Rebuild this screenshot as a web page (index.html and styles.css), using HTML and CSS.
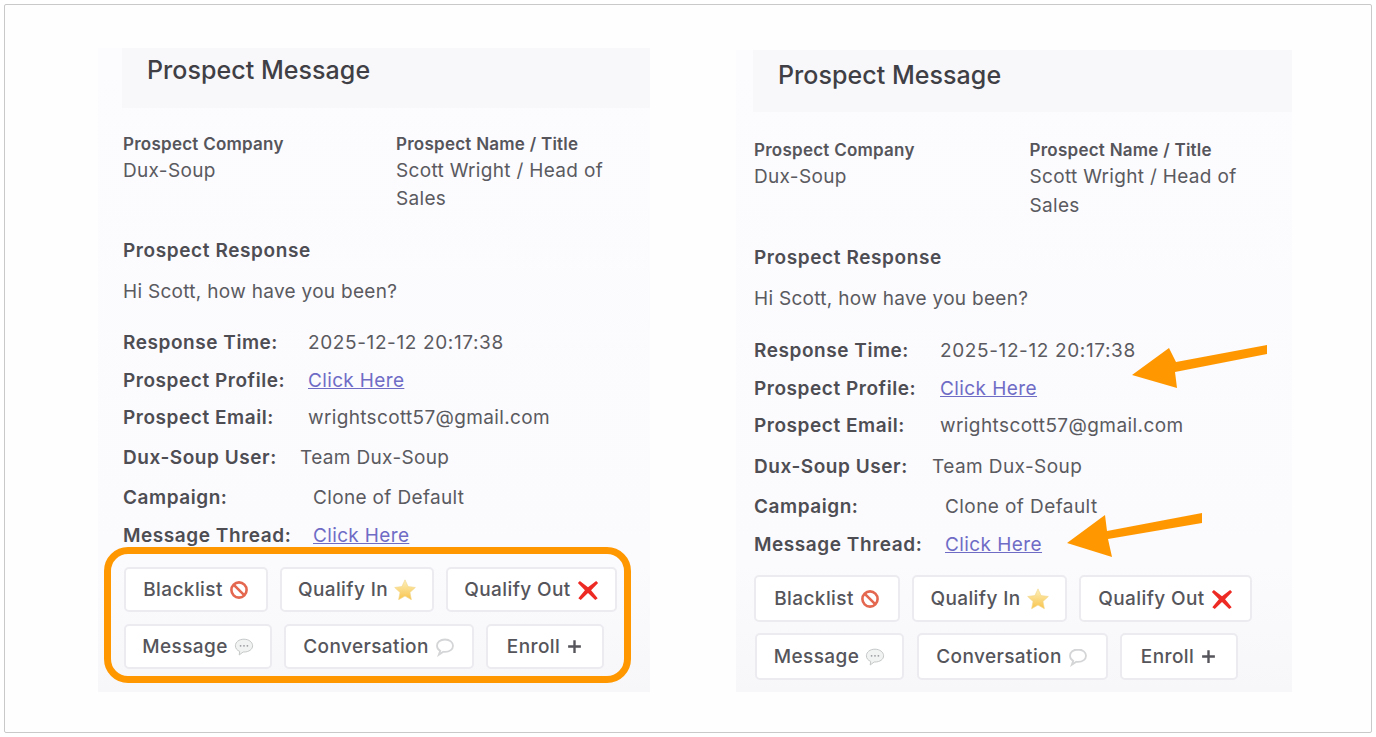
FILE: index.html
```html
<!DOCTYPE html>
<html lang="en">
<head>
<meta charset="utf-8">
<title>Prospect Message</title>
<link rel="stylesheet" href="styles.css">
</head>
<body>
<svg class="defs" width="0" height="0" aria-hidden="true">
  <defs>
    <linearGradient id="star" x1="0" y1="0" x2="0" y2="1">
      <stop offset="0" stop-color="#fdf0bc"/>
      <stop offset="1" stop-color="#f8c44c"/>
    </linearGradient>
    <symbol id="i-no" viewBox="0 0 20 20">
      <circle cx="10" cy="10" r="7.6" fill="#fff" stroke="#e4674f" stroke-width="2.6"/>
      <path d="M4.8 4.8 15.2 15.2" stroke="#e4674f" stroke-width="2.6"/>
    </symbol>
    <symbol id="i-star" viewBox="0 0 20 20">
      <path d="M10 .8 12.800 6.900 19.400 7.700 14.500 12.200 15.800 18.800 10 15.500 4.200 18.800 5.500 12.200.6 7.700 7.200 6.900Z" fill="url(#star)" stroke="#f3d88c" stroke-width=".6"/>
    </symbol>
    <symbol id="i-x" viewBox="0 0 20 20">
      <path d="M2.600 1.800 10 7.600 17.400 1.800 19.200 3.600 12.800 10.200 18.800 17.400 16.600 19.200 10 12.800 3.400 19.200 1.200 17.400 7.200 10.200.8 3.600Z" fill="#ee2a24"/>
    </symbol>
    <symbol id="i-msg" viewBox="0 0 20 20">
      <path d="M10 2.200C5 2.200 1.400 5 1.400 8.800c0 2.600 1.700 4.600 4.300 5.600l-.5 3.600 3.900-3c.3 0 .6 0 .9 0 5 0 8.600-2.700 8.600-6.200S15 2.200 10 2.200Z" fill="#f1f2f2" stroke="#c5c8c8" stroke-width="1"/>
      <circle cx="6.600" cy="8.800" r=".9" fill="#9a9d9f"/><circle cx="10" cy="8.800" r=".9" fill="#9a9d9f"/><circle cx="13.400" cy="8.800" r=".9" fill="#9a9d9f"/>
    </symbol>
    <symbol id="i-conv" viewBox="0 0 20 20">
      <path d="M10 2.500C5.200 2.500 2 5.200 2 8.800c0 2.200 1.200 4 3.200 5.100l-1.400 3.900 4.500-3c.6.100 1.100.100 1.700.100 4.800 0 8-2.600 8-6.100S14.800 2.500 10 2.500Z" fill="#fff" stroke="#d4d5d6" stroke-width="1.800"/>
    </symbol>
    <symbol id="i-plus" viewBox="0 0 20 20">
      <path d="M10 2.500v15M2.500 10h15" stroke="#55555b" stroke-width="2.800" fill="none"/>
    </symbol>
  </defs>
</svg>

<main class="frame">
  <section class="panel panel-a">
    <header class="panel-head"><h2>Prospect Message</h2></header>
    <div class="info">
      <div><h3>Prospect Company</h3><p>Dux-Soup</p></div>
      <div><h3>Prospect Name / Title</h3><p>Scott Wright / Head of<br>Sales</p></div>
    </div>
    <h4 class="resp-title">Prospect Response</h4>
    <p class="resp-text">Hi Scott, how have you been?</p>
    <div class="rows">
      <div class="row"><b class="k k-a">Response Time:</b><span class="num">2025-12-12 20:17:38</span></div>
      <div class="row"><b class="k k-a">Prospect Profile:</b><a href="#">Click Here</a></div>
      <div class="row row-tall"><b class="k k-a">Prospect Email:</b><span>wrightscott57@gmail.com</span></div>
      <div class="row row-tall"><b class="k k-b">Dux-Soup User:</b><span>Team Dux-Soup</span></div>
      <div class="row"><b class="k k-c">Campaign:</b><span>Clone of Default</span></div>
      <div class="row"><b class="k k-c">Message Thread:</b><a href="#">Click Here</a></div>
    </div>
    <div class="actions">
      <div class="btn-row">
        <button class="btn btn-black">Blacklist <svg class="ic"><use href="#i-no"/></svg></button>
        <button class="btn btn-in">Qualify In <svg class="ic ic-big"><use href="#i-star"/></svg></button>
        <button class="btn btn-out">Qualify Out <svg class="ic ic-big"><use href="#i-x"/></svg></button>
      </div>
      <div class="btn-row">
        <button class="btn btn-msg">Message <svg class="ic"><use href="#i-msg"/></svg></button>
        <button class="btn btn-conv">Conversation <svg class="ic"><use href="#i-conv"/></svg></button>
        <button class="btn btn-enroll">Enroll <svg class="ic ic-plus"><use href="#i-plus"/></svg></button>
      </div>
    </div>
    <div class="ring"></div>
  </section>

  <section class="panel panel-b">
    <header class="panel-head"><h2>Prospect Message</h2></header>
    <div class="info">
      <div><h3>Prospect Company</h3><p>Dux-Soup</p></div>
      <div><h3>Prospect Name / Title</h3><p>Scott Wright / Head of<br>Sales</p></div>
    </div>
    <h4 class="resp-title">Prospect Response</h4>
    <p class="resp-text">Hi Scott, how have you been?</p>
    <div class="rows">
      <div class="row"><b class="k k-a">Response Time:</b><span class="num">2025-12-12 20:17:38</span></div>
      <div class="row"><b class="k k-a">Prospect Profile:</b><a href="#">Click Here</a></div>
      <div class="row row-tall"><b class="k k-a">Prospect Email:</b><span>wrightscott57@gmail.com</span></div>
      <div class="row row-tall"><b class="k k-b">Dux-Soup User:</b><span>Team Dux-Soup</span></div>
      <div class="row"><b class="k k-c">Campaign:</b><span>Clone of Default</span></div>
      <div class="row"><b class="k k-c">Message Thread:</b><a href="#">Click Here</a></div>
    </div>
    <div class="actions">
      <div class="btn-row">
        <button class="btn btn-black">Blacklist <svg class="ic"><use href="#i-no"/></svg></button>
        <button class="btn btn-in">Qualify In <svg class="ic ic-big"><use href="#i-star"/></svg></button>
        <button class="btn btn-out">Qualify Out <svg class="ic ic-big"><use href="#i-x"/></svg></button>
      </div>
      <div class="btn-row">
        <button class="btn btn-msg">Message <svg class="ic"><use href="#i-msg"/></svg></button>
        <button class="btn btn-conv">Conversation <svg class="ic"><use href="#i-conv"/></svg></button>
        <button class="btn btn-enroll">Enroll <svg class="ic ic-plus"><use href="#i-plus"/></svg></button>
      </div>
    </div>
    <svg class="arrows" viewBox="0 0 556 642" aria-hidden="true">
      <path d="M531 295 440 312 433 298 396 325 441 338 439 322 531 304Z" fill="#ff9800"/>
      <path d="M466 463 371 481 369 465 331 493 376 507 372 489 466 473Z" fill="#ff9800"/>
    </svg>
  </section>
</main>
</body>
</html>
```

FILE: styles.css
```css
* { box-sizing: border-box; }
html, body { margin: 0; padding: 0; background: #fff; }
body { padding: 4px; font-family: Inter, "Noto Sans", sans-serif; color: #5a5a60; }
.defs { position: absolute; }

.frame {
  display: flex;
  width: 1368px;
  height: 729px;
  padding: 43px 0 0 93px;
  background: #fefefe;
  border: 1px solid #c9c9c9;
  border-radius: 2px;
}

.panel {
  position: relative;
  flex: none;
  background: linear-gradient(#fcfbfe, #fbfafd 80%, #f7f6f9);
}
.panel-a { width: 552px; height: 644px; padding-left: 25px; }
.panel-b { width: 556px; height: 642px; margin: 2px 0 0 86px; padding-left: 18px; }

.panel-head {
  height: 60px;
  margin-left: -1px;
  padding: 7px 0 0 25px;
  background: #f8f7fa;
}
.panel-b .panel-head { height: 62px; padding-top: 10px; }
h2 { margin: 0; font-size: 25px; line-height: 30px; font-weight: 500; letter-spacing: .05px; color: #3f3f45; }

.info { display: grid; margin-top: 24px; }
.panel-a .info { grid-template-columns: 273px 1fr; }
.panel-b .info { grid-template-columns: 275.500px 1fr; margin-top: 26px; }
h3 { margin: 0; font-size: 17px; line-height: 24px; font-weight: 600; letter-spacing: .25px; color: #55555b; }
.info p { margin: 1px 0 0; font-size: 19px; line-height: 28px; letter-spacing: .32px; }
.panel-b .info p { margin-top: 0; line-height: 29px; }

.resp-title { margin: 24px 0 0; font-size: 19px; line-height: 28px; font-weight: 600; letter-spacing: .6px; color: #4d4d53; }
.resp-text { margin: 13px 0 0; font-size: 19px; line-height: 28px; letter-spacing: .3px; }

.rows { margin-top: 23px; }
.panel-b .rows { margin-top: 24px; }
.row { display: flex; height: 37.500px; font-size: 19px; line-height: 28px; letter-spacing: .35px; }
.panel-b .row { letter-spacing: .42px; }
.row-tall { height: 40px; }
.panel-b .row-tall { height: 40.500px; }
.row .k { flex: none; font-weight: 600; letter-spacing: .55px; color: #4d4d53; }
.k-a { width: 185px; }
.k-b { width: 177px; }
.k-c { width: 190px; }
.panel-b .k-a { width: 186px; }
.panel-b .k-b { width: 178px; }
.panel-b .k-c { width: 191px; }
.row .num { letter-spacing: .62px; }
a { color: #6f6cc6; }

.actions { display: flex; flex-direction: column; gap: 12px; margin: 8px 0 0 1px; }
.panel-b .actions { gap: 11px; margin: 7px 0 0; }
.btn-row { display: flex; gap: 12px; }
.panel-b .btn-row + .btn-row { gap: 12.500px; margin-left: 1px; }
.btn {
  display: flex;
  align-items: center;
  justify-content: center;
  gap: 6px;
  height: 45px;
  padding: 0;
  font: 500 19px/24px Inter, "Noto Sans", sans-serif;
  letter-spacing: .4px;
  color: #55555b;
  background: #fff;
  border: 2px solid #ecebef;
  border-radius: 5px;
}
.panel-b .btn { height: 47px; }
.btn-black { width: 144px; }
.btn-in { width: 154px; }
.btn-out { width: 171px; }
.btn-msg { width: 148px; }
.btn-conv { width: 190px; }
.btn-enroll { width: 118px; }
.panel-b .btn-black { width: 146px; }
.panel-b .btn-in { width: 155px; }
.panel-b .btn-out { width: 173px; }
.panel-b .btn-msg { width: 149px; }
.panel-b .btn-conv { width: 191px; }
.ic { width: 20px; height: 20px; flex: none; }
.ic-big { width: 22px; height: 22px; }
.ic-plus { width: 17px; height: 17px; }

.ring {
  position: absolute;
  left: 6px;
  top: 499px;
  width: 527px;
  height: 136px;
  border: 7px solid #ff9800;
  border-radius: 24px;
}
.arrows { position: absolute; left: 0; top: 0; width: 556px; height: 642px; pointer-events: none; }
```
